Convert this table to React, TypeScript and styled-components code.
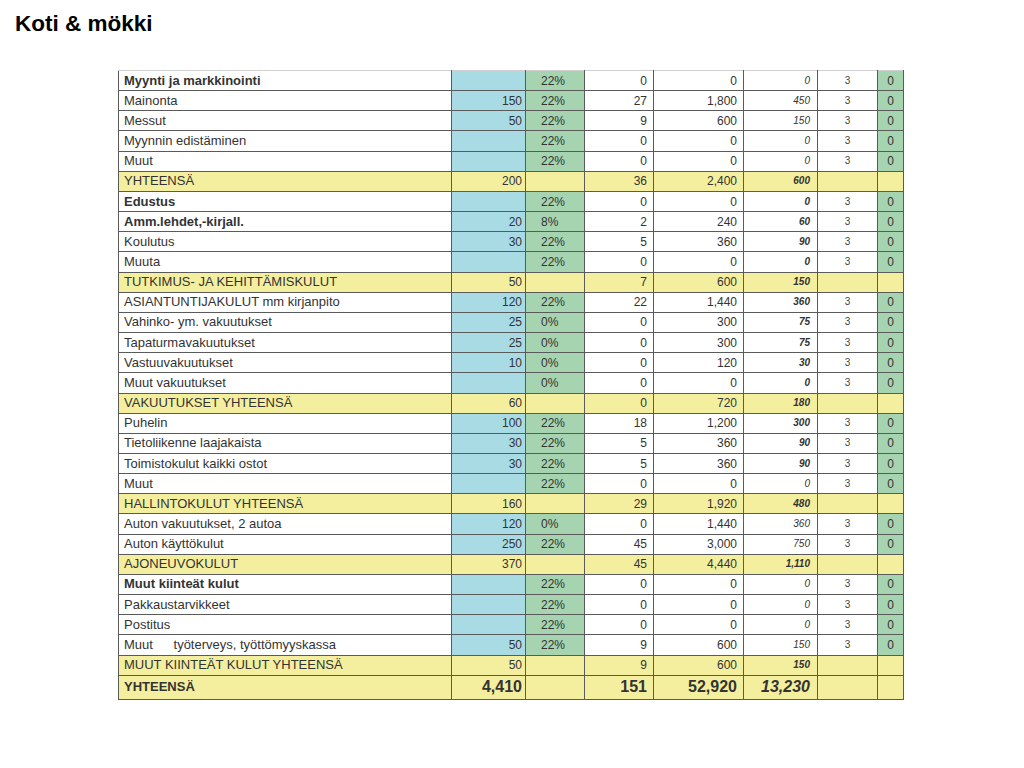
import React from "react";
import styled, { createGlobalStyle, css } from "styled-components";

const Global = createGlobalStyle`
  html, body { margin: 0; padding: 0; background: #ffffff; }
  body { font-family: "Liberation Sans", Arial, sans-serif; color: #333; }
`;

const Page = styled.div`
  padding: 11px 0 0 15px;
`;

const Title = styled.h1`
  margin: 0;
  font-size: 22.5px;
  line-height: 26px;
  font-weight: bold;
  color: #000;
`;

const Sheet = styled.table`
  margin: 33px 0 0 103px;
  border-collapse: collapse;
  table-layout: fixed;
  width: 785px;
  font-family: "Liberation Sans", Arial, sans-serif;
  color: #333;
`;

type Kind = "item" | "total" | "grand";

const Row = styled.tr<{ $kind: Kind }>`
  height: ${(p) => (p.$kind === "grand" ? "24px" : "20.17px")};
  ${(p) =>
    p.$kind !== "item" &&
    css`
      background: #f4ef9f;
    `}
`;

const Cell = styled.td`
  border: 1px solid #5a5a5a;
  padding: 0;
  white-space: nowrap;
  overflow: hidden;
  vertical-align: middle;
  line-height: 16px;
`;

const Label = styled(Cell)<{ $bold?: boolean }>`
  padding-left: 5px;
  font-size: 13px;
  font-weight: ${(p) => (p.$bold ? "bold" : "normal")};
`;

const Gap = styled.span`
  display: inline-block;
  width: 17px;
`;

const Amount = styled(Cell)<{ $tint?: string; $pad?: number; $big?: boolean }>`
  text-align: right;
  padding-right: ${(p) => p.$pad ?? 6}px;
  font-size: ${(p) => (p.$big ? "16px" : "12px")};
  font-weight: ${(p) => (p.$big ? "bold" : "normal")};
  ${(p) => p.$tint && css`background: ${p.$tint};`}
`;

const Pct = styled(Cell)<{ $tint?: string }>`
  padding-left: 15px;
  font-size: 12px;
  ${(p) => p.$tint && css`background: ${p.$tint};`}
`;

const Share = styled(Cell)<{ $bold?: boolean; $big?: boolean }>`
  text-align: right;
  padding-right: 7px;
  font-style: italic;
  font-size: ${(p) => (p.$big ? "16px" : "10px")};
  font-weight: ${(p) => (p.$bold ? "bold" : "normal")};
`;

const Count = styled(Cell)`
  text-align: center;
  font-size: 10px;
  color: #444;
`;

const Flag = styled(Cell)<{ $tint?: string }>`
  text-align: center;
  font-size: 12px;
  ${(p) => p.$tint && css`background: ${p.$tint};`}
`;

const FirstRow = styled(Row)`
  & > td { border-top-color: #d0d0d0; }
`;

const BLUE = "#a9dbe5";
const GREEN = "#a6d3b0";

type Line = {
  label: string;
  extra?: string;
  bold?: boolean;
  kind: Kind;
  base: string;
  pct?: string;
  vat: string;
  year: string;
  share: string;
  shareBold?: boolean;
};

const rows: Line[] = [
  { label: "Myynti ja markkinointi", bold: true, kind: "item", base: "", pct: "22%", vat: "0", year: "0", share: "0" },
  { label: "Mainonta", kind: "item", base: "150", pct: "22%", vat: "27", year: "1,800", share: "450" },
  { label: "Messut", kind: "item", base: "50", pct: "22%", vat: "9", year: "600", share: "150" },
  { label: "Myynnin edistäminen", kind: "item", base: "", pct: "22%", vat: "0", year: "0", share: "0" },
  { label: "Muut", kind: "item", base: "", pct: "22%", vat: "0", year: "0", share: "0" },
  { label: "YHTEENSÄ", kind: "total", base: "200", vat: "36", year: "2,400", share: "600", shareBold: true },
  { label: "Edustus", bold: true, kind: "item", base: "", pct: "22%", vat: "0", year: "0", share: "0", shareBold: true },
  { label: "Amm.lehdet,-kirjall.", bold: true, kind: "item", base: "20", pct: "8%", vat: "2", year: "240", share: "60", shareBold: true },
  { label: "Koulutus", kind: "item", base: "30", pct: "22%", vat: "5", year: "360", share: "90", shareBold: true },
  { label: "Muuta", kind: "item", base: "", pct: "22%", vat: "0", year: "0", share: "0", shareBold: true },
  { label: "TUTKIMUS- JA KEHITTÄMISKULUT", kind: "total", base: "50", vat: "7", year: "600", share: "150", shareBold: true },
  { label: "ASIANTUNTIJAKULUT mm kirjanpito", kind: "item", base: "120", pct: "22%", vat: "22", year: "1,440", share: "360", shareBold: true },
  { label: "Vahinko- ym. vakuutukset", kind: "item", base: "25", pct: "0%", vat: "0", year: "300", share: "75", shareBold: true },
  { label: "Tapaturmavakuutukset", kind: "item", base: "25", pct: "0%", vat: "0", year: "300", share: "75", shareBold: true },
  { label: "Vastuuvakuutukset", kind: "item", base: "10", pct: "0%", vat: "0", year: "120", share: "30", shareBold: true },
  { label: "Muut vakuutukset", kind: "item", base: "", pct: "0%", vat: "0", year: "0", share: "0", shareBold: true },
  { label: "VAKUUTUKSET YHTEENSÄ", kind: "total", base: "60", vat: "0", year: "720", share: "180", shareBold: true },
  { label: "Puhelin", kind: "item", base: "100", pct: "22%", vat: "18", year: "1,200", share: "300", shareBold: true },
  { label: "Tietoliikenne laajakaista", kind: "item", base: "30", pct: "22%", vat: "5", year: "360", share: "90", shareBold: true },
  { label: "Toimistokulut kaikki ostot", kind: "item", base: "30", pct: "22%", vat: "5", year: "360", share: "90", shareBold: true },
  { label: "Muut", kind: "item", base: "", pct: "22%", vat: "0", year: "0", share: "0" },
  { label: "HALLINTOKULUT YHTEENSÄ", kind: "total", base: "160", vat: "29", year: "1,920", share: "480", shareBold: true },
  { label: "Auton vakuutukset, 2 autoa", kind: "item", base: "120", pct: "0%", vat: "0", year: "1,440", share: "360" },
  { label: "Auton käyttökulut", kind: "item", base: "250", pct: "22%", vat: "45", year: "3,000", share: "750" },
  { label: "AJONEUVOKULUT", kind: "total", base: "370", vat: "45", year: "4,440", share: "1,110", shareBold: true },
  { label: "Muut kiinteät kulut", bold: true, kind: "item", base: "", pct: "22%", vat: "0", year: "0", share: "0" },
  { label: "Pakkaustarvikkeet", kind: "item", base: "", pct: "22%", vat: "0", year: "0", share: "0" },
  { label: "Postitus", kind: "item", base: "", pct: "22%", vat: "0", year: "0", share: "0" },
  { label: "Muut", extra: "työterveys, työttömyyskassa", kind: "item", base: "50", pct: "22%", vat: "9", year: "600", share: "150" },
  { label: "MUUT KIINTEÄT KULUT YHTEENSÄ", kind: "total", base: "50", vat: "9", year: "600", share: "150", shareBold: true },
  { label: "YHTEENSÄ", bold: true, kind: "grand", base: "4,410", vat: "151", year: "52,920", share: "13,230", shareBold: true },
];

const widths = [333, 74, 59, 69, 90, 74, 60, 26];

function SheetRow({ r, first }: { r: Line; first: boolean }) {
  const RowComp = first ? FirstRow : Row;
  const item = r.kind === "item";
  const big = r.kind === "grand";
  return (
    <RowComp $kind={r.kind}>
      <Label $bold={r.bold}>
        {r.label}
        {r.extra && (
          <>
            <Gap /> {r.extra}
          </>
        )}
      </Label>
      <Amount $tint={item ? BLUE : undefined} $pad={3} $big={big}>
        {r.base}
      </Amount>
      <Pct $tint={item ? GREEN : undefined}>{r.pct ?? ""}</Pct>
      <Amount $big={big}>{r.vat}</Amount>
      <Amount $big={big}>{r.year}</Amount>
      <Share $bold={r.shareBold} $big={big}>
        {r.share}
      </Share>
      <Count>{item ? "3" : ""}</Count>
      <Flag $tint={item ? GREEN : undefined}>{item ? "0" : ""}</Flag>
    </RowComp>
  );
}

export default function App() {
  return (
    <>
      <Global />
      <Page>
        <Title>Koti &amp; mökki</Title>
        <Sheet>
          <colgroup>
            {widths.map((w, i) => (
              <col key={i} style={{ width: w }} />
            ))}
          </colgroup>
          <tbody>
            {rows.map((r, i) => (
              <SheetRow key={i} r={r} first={i === 0} />
            ))}
          </tbody>
        </Sheet>
      </Page>
    </>
  );
}
